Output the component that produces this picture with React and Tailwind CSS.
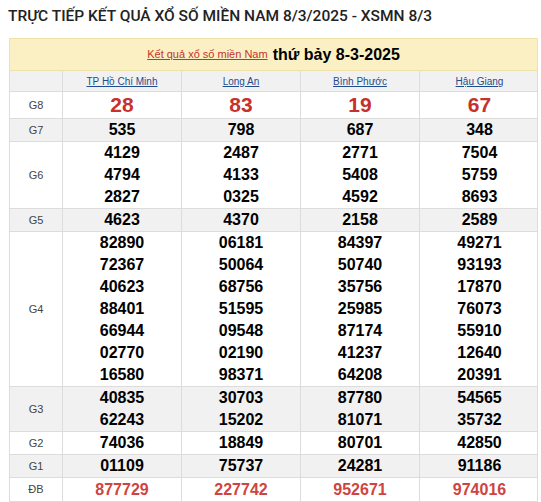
const provinces = ["TP Hồ Chí Minh", "Long An", "Bình Phước", "Hậu Giang"];

const rows = [
  { label: "G8", big: true, values: [["28"], ["83"], ["19"], ["67"]] },
  { label: "G7", values: [["535"], ["798"], ["687"], ["348"]] },
  {
    label: "G6",
    values: [
      ["4129", "4794", "2827"],
      ["2487", "4133", "0325"],
      ["2771", "5408", "4592"],
      ["7504", "5759", "8693"],
    ],
  },
  { label: "G5", values: [["4623"], ["4370"], ["2158"], ["2589"]] },
  {
    label: "G4",
    values: [
      ["82890", "72367", "40623", "88401", "66944", "02770", "16580"],
      ["06181", "50064", "68756", "51595", "09548", "02190", "98371"],
      ["84397", "50740", "35756", "25985", "87174", "41237", "64208"],
      ["49271", "93193", "17870", "76073", "55910", "12640", "20391"],
    ],
  },
  {
    label: "G3",
    values: [
      ["40835", "62243"],
      ["30703", "15202"],
      ["87780", "81071"],
      ["54565", "35732"],
    ],
  },
  { label: "G2", values: [["74036"], ["18849"], ["80701"], ["42850"]] },
  { label: "G1", values: [["01109"], ["75737"], ["24281"], ["91186"]] },
  { label: "ĐB", special: true, values: [["877729"], ["227742"], ["952671"], ["974016"]] },
];

function ResultRow({ row, shaded }) {
  const numClass = row.big
    ? "text-[21px] leading-[26px] text-[#c8302c]"
    : row.special
    ? "text-[16px] leading-[23px] text-[#d04440]"
    : "text-[16px] leading-[22px] text-black";
  return (
    <div
      className={`grid grid-cols-[53px_repeat(4,119px)] border-b border-[#dcdcdc] ${
        shaded ? "bg-[#f1f1f1]" : "bg-white"
      }`}
    >
      <div className="flex items-center justify-center border-r border-[#dcdcdc] text-[11px] text-[#444]">
        {row.label}
      </div>
      {row.values.map((nums, i) => (
        <div
          key={i}
          className={`flex flex-col items-center font-bold ${numClass} ${
            i < 3 ? "border-r border-[#dcdcdc]" : ""
          }`}
        >
          {nums.map((n) => (
            <span key={n}>{n}</span>
          ))}
        </div>
      ))}
    </div>
  );
}

export default function App() {
  return (
    <div className="h-[502px] w-[541px] overflow-hidden bg-white font-['Liberation_Sans',Arial,sans-serif]">
      <h1 className="px-2 pt-[6px] font-['Roboto',sans-serif] text-[15.5px] font-medium leading-[20px] text-[#222]">
        TRỰC TIẾP KẾT QUẢ XỔ SỐ MIỀN NAM 8/3/2025 - XSMN 8/3
      </h1>
      <div className="ml-[9px] mt-[12px] w-[529px]">
        <div className="flex h-[33px] items-center justify-center gap-[5px] border border-[#efe2a8] bg-[#fbf0c3]">
          <a className="text-[11px] text-[#c3332d] underline">Kết quả xổ số miền Nam</a>
          <span className="text-[16px] font-bold text-black">thứ bảy 8-3-2025</span>
        </div>
        <div className="border-x border-[#dcdcdc]">
          <div className="grid h-[21px] grid-cols-[53px_repeat(4,119px)] border-b border-[#dcdcdc] bg-[#f1f1f1]">
            <div className="border-r border-[#dcdcdc]" />
            {provinces.map((p, i) => (
              <div
                key={p}
                className={`flex items-center justify-center text-[10px] text-[#1f4c8f] underline ${
                  i < 3 ? "border-r border-[#dcdcdc]" : ""
                }`}
              >
                {p}
              </div>
            ))}
          </div>
          {rows.map((row, i) => (
            <ResultRow key={row.label} row={row} shaded={i % 2 === 1} />
          ))}
        </div>
      </div>
    </div>
  );
}
